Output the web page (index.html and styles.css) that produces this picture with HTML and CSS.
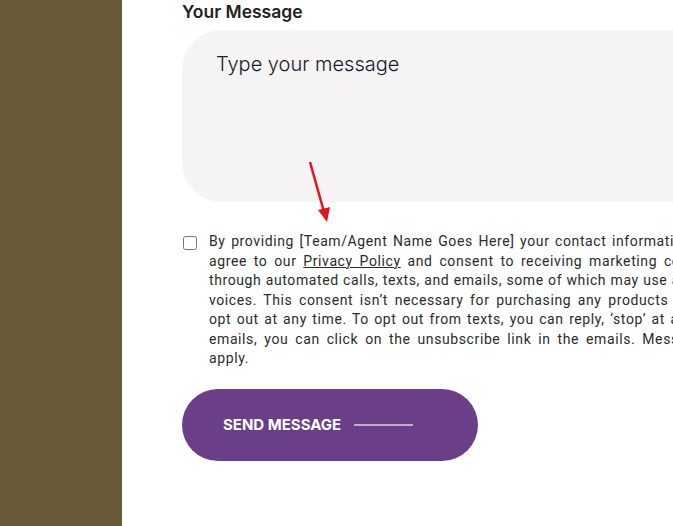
FILE: index.html
```html
<!DOCTYPE html>
<html lang="en">
<head>
    <title>Contact</title>
    <link rel="stylesheet" href="styles.css">
</head>
<body>
   <div class="page">
    <aside class="side"></aside>
    <main class="content">
        <form class="contact-form">
            <label class="field-label" for="message">Your Message</label>
            <textarea id="message" placeholder="Type your message"></textarea>
            <div class="consent">
                <input type="checkbox" id="agree">
                <p>By providing [Team/Agent Name Goes Here] your contact information, you acknowledge and agree to our <a href="#">Privacy Policy</a> and consent to receiving marketing communications, including through automated calls, texts, and emails, some of which may use automated or prerecorded voices. This consent isn&rsquo;t necessary for purchasing any products or services and you may opt&nbsp;out at any time. To opt out from texts, you can reply, &lsquo;stop&rsquo; at any time. To opt out from emails, you can click on the unsubscribe link in the emails. Message and data rates may apply.</p>
            </div>
            <button type="submit" class="send-btn">SEND MESSAGE <span class="line"></span></button>
        </form>
        <!-- annotation arrow -->
        <svg class="arrow" width="30" height="70" viewBox="0 0 30 70">
            <line x1="4" y1="2" x2="18" y2="52" stroke="#e0161b" stroke-width="2.5"/>
            <polygon points="12,50 24,47 21,62" fill="#e0161b"/>
        </svg>
    </main>
   </div>
</body>
</html>
```
FILE: styles.css
```css
*{
    box-sizing: border-box;
}
body{
    margin: 0;
    padding: 0;
    overflow: hidden;
    font-family: Inter, "Noto Sans", sans-serif;
    background: #fff;
}
.page{
    display: flex;
    min-height: 526px;
}
.side{
    width: 122px;
    flex-shrink: 0;
    background-color: #695b3a;
}
.content{
    position: relative;
    padding: 2px 0 0 60px;
    flex-shrink: 0;
}
.contact-form{
    display: flex;
    flex-direction: column;
    align-items: flex-start;
    width: 720px;
}
.field-label{
    font-size: 17.5px;
    font-weight: 600;
    color: #222;
    line-height: 20px;
    margin-bottom: 8px;
}
textarea{
    width: 720px;
    height: 172px;
    border: none;
    resize: none;
    background: #f5f3f3;
    border-radius: 40px 0 0 40px;
    padding: 22px 34px;
    font-family: Inter, sans-serif;
    font-size: 20px;
    font-weight: 300;
    line-height: 24px;
    color: #1a1a2e;
}
textarea::placeholder{
    color: #1a1a2e;
    opacity: 1;
}
/* consent text */
.consent{
    display: flex;
    align-items: flex-start;
    margin-top: 29px;
    gap: 12px;
}
.consent input{
    margin: 5px 0 0 1px;
    width: 14px;
    height: 14px;
    flex-shrink: 0;
}
.consent p{
    margin: 0;
    margin-top: 1px;
    width: 640px;
    font-family: Roboto, "Liberation Sans", sans-serif;
    font-size: 14px;
    line-height: 19.5px;
    letter-spacing: 0.6px;
    color: #2b2b2b;
    text-align: justify;
}
.consent a{
    color: #2b2b2b;
}
.send-btn{
    margin-top: 20px;
    width: 296px;
    height: 72px;
    border: none;
    border-radius: 36px;
    background: #6a3f87;
    color: #fff;
    font-family: Inter, sans-serif;
    font-size: 15px;
    font-weight: 700;
    display: flex;
    align-items: center;
    padding-left: 41px;
    gap: 13px;
}
.send-btn .line{
    display: inline-block;
    width: 59px;
    height: 2px;
    background: #c3acd3;
}
.arrow{
    position: absolute;
    left: 184px;
    top: 160px;
}
```
